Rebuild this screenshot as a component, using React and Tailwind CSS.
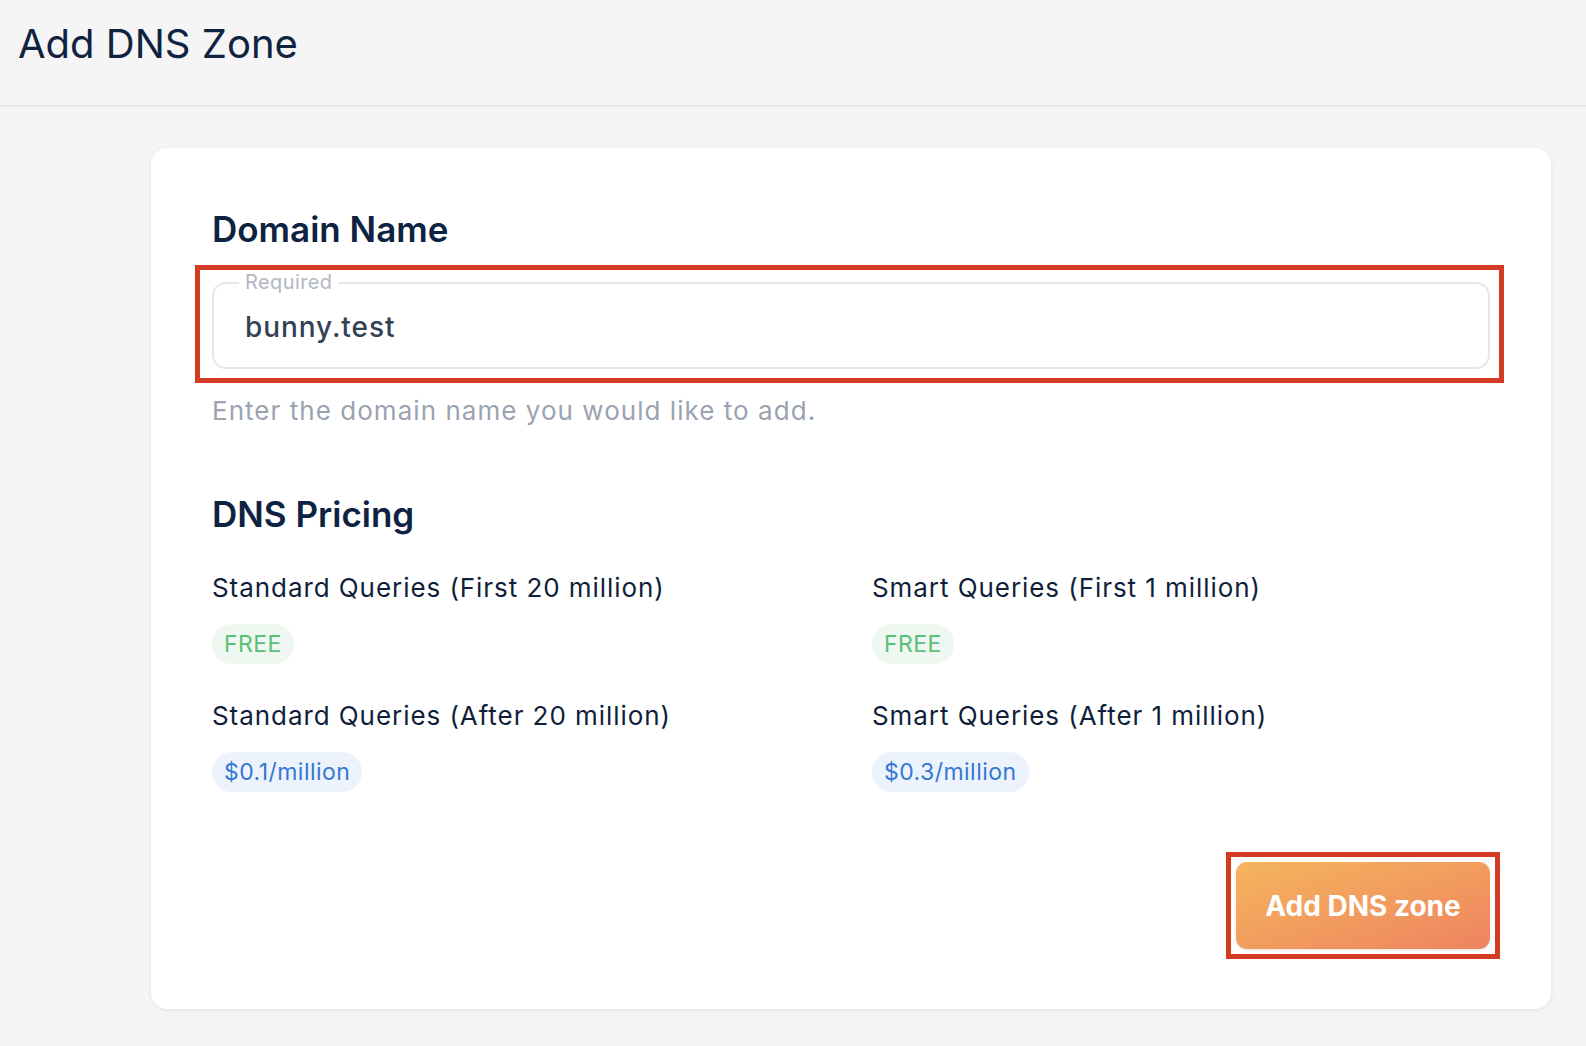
export default function App() {
  const prices = [
    { label: "Standard Queries (First 20 million)", value: "FREE", tone: "green" },
    { label: "Smart Queries (First 1 million)", value: "FREE", tone: "green" },
    { label: "Standard Queries (After 20 million)", value: "$0.1/million", tone: "blue" },
    { label: "Smart Queries (After 1 million)", value: "$0.3/million", tone: "blue" },
  ];

  return (
    <div className="min-h-screen bg-[#f5f5f5] font-['Inter',sans-serif] pb-[36px]">
      <header className="h-[107px] border-b-2 border-[#e6e6ea] pl-[18px] pt-[20px]">
        <h1 className="text-[40px] leading-[48px] font-normal text-[#0f2340]">Add DNS Zone</h1>
      </header>

      <main className="pt-[41px] pl-[151px]">
        <section className="w-[1400px] bg-white rounded-[16px] shadow-[0_1px_4px_rgba(0,0,0,0.08)] px-[61px] pt-[60px] pb-[60px]">
          <h2 className="text-[35px] leading-[42px] font-semibold text-[#0e2341]">Domain Name</h2>

          <div className="relative mt-[32px]">
            <div className="relative h-[87px] rounded-[14px] border-2 border-[#e7e7ed] flex items-center pl-[31px]">
              <span className="absolute left-[25px] top-[-14px] bg-white px-[6px] text-[20px] leading-[24px] tracking-[0.02em] text-[#b2b7c0]">
                Required
              </span>
              <span className="text-[28px] leading-[34px] font-medium tracking-[0.033em] text-[#334155] mt-[2px]">
                bunny.test
              </span>
            </div>
            <div className="absolute left-[-17px] right-[-14px] top-[-17px] bottom-[-14px] border-[5px] border-[#d33b22] pointer-events-none" />
          </div>

          <p className="mt-[27px] text-[26px] leading-[30px] tracking-[0.04em] text-[#9aa3b0]">
            Enter the domain name you would like to add.
          </p>

          <h2 className="mt-[67px] text-[35px] leading-[42px] font-semibold text-[#0e2341]">DNS Pricing</h2>

          <div className="mt-[37px] grid grid-cols-2 gap-x-[42px] gap-y-[36px]">
            {prices.map((p) => (
              <div key={p.label} className="flex flex-col items-start gap-[20px]">
                <div className="text-[26px] leading-[32px] tracking-[0.036em] text-[#0f1f3a]">{p.label}</div>
                {p.tone === "green" ? (
                  <span className="h-[40px] rounded-full bg-[#eef8f1] px-[12px] flex items-center text-[23px] tracking-[0.02em] text-[#5bbf78]">
                    {p.value}
                  </span>
                ) : (
                  <span className="h-[40px] rounded-full bg-[#ecf3fd] px-[12px] flex items-center text-[23px] tracking-[0.02em] text-[#3577d4]">
                    {p.value}
                  </span>
                )}
              </div>
            ))}
          </div>

          <div className="mt-[70px] flex justify-end">
            <div className="relative">
              <button className="w-[254px] h-[87px] rounded-[11px] bg-linear-to-br from-[#f4b55c] to-[#ee8360] shadow-[0_1px_3px_rgba(0,0,0,0.12)] text-white text-[28px] font-bold">
                Add DNS zone
              </button>
              <div className="absolute -left-[10px] -right-[10px] -top-[10px] -bottom-[10px] border-[5px] border-[#d33b22] pointer-events-none" />
            </div>
          </div>
        </section>
      </main>
    </div>
  );
}
